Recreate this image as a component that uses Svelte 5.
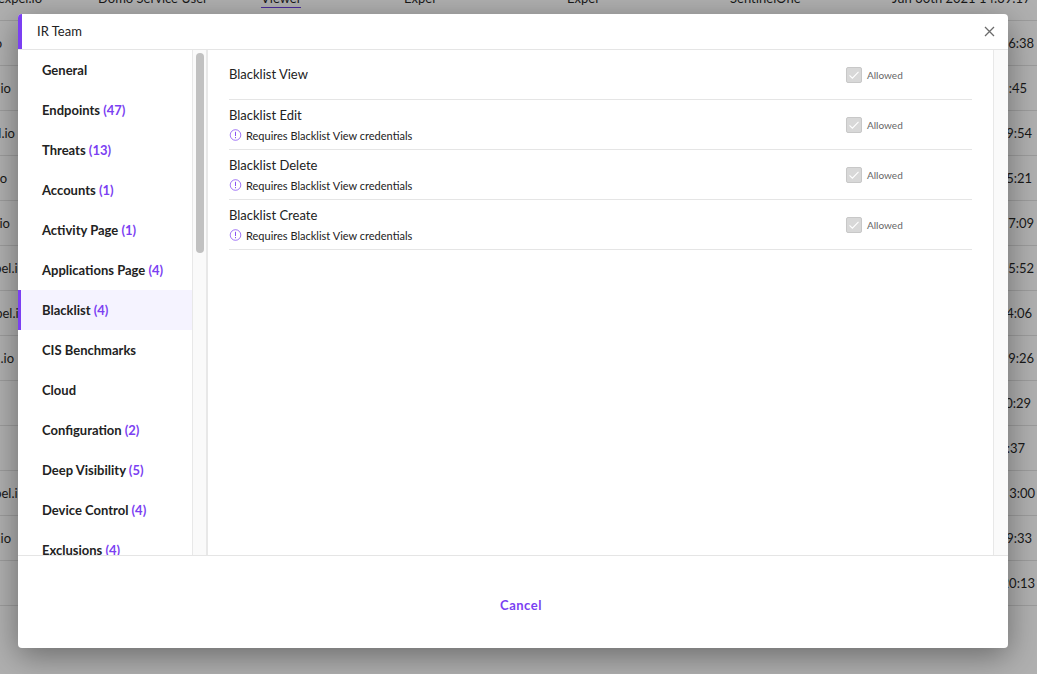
<script>
    let selected = 'Blacklist';

    const sections = [
        { name: 'General', count: 0 },
        { name: 'Endpoints', count: 47 },
        { name: 'Threats', count: 13 },
        { name: 'Accounts', count: 1 },
        { name: 'Activity Page', count: 1 },
        { name: 'Applications Page', count: 4 },
        { name: 'Blacklist', count: 4 },
        { name: 'CIS Benchmarks', count: 0 },
        { name: 'Cloud', count: 0 },
        { name: 'Configuration', count: 2 },
        { name: 'Deep Visibility', count: 5 },
        { name: 'Device Control', count: 4 },
        { name: 'Exclusions', count: 4 },
    ];

    const permissions = [
        { name: 'Blacklist View', requires: '' },
        { name: 'Blacklist Edit', requires: 'Blacklist View' },
        { name: 'Blacklist Delete', requires: 'Blacklist View' },
        { name: 'Blacklist Create', requires: 'Blacklist View' },
    ];

    // mailEnd and timeEnd are where the text of each cell stops
    const users = [
        { mail: 'o', mailEnd: 2, time: '6:38', timeEnd: 1034 },
        { mail: 'io', mailEnd: 11, time: ':45', timeEnd: 1027 },
        { mail: 'l.io', mailEnd: 15, time: '9:54', timeEnd: 1032 },
        { mail: 'o', mailEnd: 7, time: '5:21', timeEnd: 1032 },
        { mail: 'io', mailEnd: 10, time: '7:09', timeEnd: 1034 },
        { mail: 'pel.io', mailEnd: 25, time: '5:52', timeEnd: 1034 },
        { mail: 'pel.io', mailEnd: 26, time: '4:06', timeEnd: 1032 },
        { mail: '.io', mailEnd: 14, time: '9:26', timeEnd: 1034 },
        { mail: '', mailEnd: 0, time: '0:29', timeEnd: 1031 },
        { mail: '', mailEnd: 0, time: ':37', timeEnd: 1025 },
        { mail: 'pel.io', mailEnd: 25, time: '3:00', timeEnd: 1035 },
        { mail: '.io', mailEnd: 11, time: '9:33', timeEnd: 1032 },
        { mail: '', mailEnd: 0, time: '20:13', timeEnd: 1035 },
    ];
</script>

<div class="page">
    <div class="users">
        <div class="user-row first">
            <span class="c-mail">expel.io</span>
            <span class="c-name">Domo Service User</span>
            <span class="c-role"><span class="role">Viewer</span></span>
            <span class="c-account">Expel</span>
            <span class="c-site">Expel</span>
            <span class="c-source">SentinelOne</span>
            <span class="c-date">Jun 30th 2021 14:39:17</span>
        </div>
        {#each users as user}
            <div class="user-row">
                <span class="mail" style="width: {user.mailEnd}px">{user.mail}</span>
                <span class="time" style="width: {user.timeEnd - user.mailEnd}px">{user.time}</span>
            </div>
        {/each}
    </div>

    <div class="modal">
        <header>
            <h1>IR Team</h1>
            <button class="close" aria-label="Close">
                <svg width="11" height="11" viewBox="0 0 11 11">
                    <path d="M1 1L10 10M10 1L1 10" fill="none" stroke="#6b6b6b" stroke-width="1.3" />
                </svg>
            </button>
        </header>

        <div class="body">
            <nav>
                {#each sections as section}
                    <button
                        class="section"
                        class:active={section.name === selected}
                        on:click={() => (selected = section.name)}
                    >
                        {section.name}
                        {#if section.count}<span class="count">({section.count})</span>{/if}
                    </button>
                {/each}
            </nav>
            <div class="track left"><div class="thumb"></div></div>

            <div class="permissions">
                {#each permissions as permission}
                    <div class="permission">
                        <div class="info" class:single={!permission.requires}>
                            <div class="name">{permission.name}</div>
                            {#if permission.requires}
                                <div class="hint">
                                    <svg width="13" height="12" viewBox="0 0 13 12">
                                        <circle cx="6.5" cy="6" r="5.3" fill="none" stroke="#7b3ff2" stroke-width="0.7" />
                                        <path d="M6.5 2.8V7M6.5 8V9.2" stroke="#7b3ff2" stroke-width="0.9" />
                                    </svg>
                                    <span class="hint-text">Requires {permission.requires} credentials</span>
                                </div>
                            {/if}
                        </div>
                        <div class="allowed">
                            <span class="checkbox">
                                <svg width="14" height="14" viewBox="0 0 14 14">
                                    <path d="M2.5 7.3L5.4 10.2L11.5 3.8" fill="none" stroke="#fff" stroke-width="1.1" />
                                </svg>
                            </span>
                            <span>Allowed</span>
                        </div>
                    </div>
                {/each}
            </div>
            <div class="track right"></div>
        </div>

        <footer>
            <button class="cancel">Cancel</button>
        </footer>
    </div>
</div>

<style>
    :global(body) {
        margin: 0;
    }

    .page {
        position: relative;
        width: 1037px;
        height: 674px;
        overflow: hidden;
        background: #b0b0b0;
        font-family: Lato, sans-serif;
        font-size: 13px;
        color: #222;
    }

    button {
        padding: 0;
        border: none;
        background: none;
        font: inherit;
        cursor: pointer;
    }

    .users {
        margin-top: -25px;
    }

    .user-row {
        display: flex;
        align-items: center;
        box-sizing: border-box;
        height: 45px;
        border-bottom: 1px solid #9c9c9c;
        white-space: nowrap;
        color: #181818;
    }

    .user-row.first {
        display: grid;
        grid-template-columns: 98px 163px 143px 163px 163px 162px 145px;
        height: 46px;
    }

    .c-mail {
        justify-self: end;
        margin-right: 56px;
    }

    .role {
        padding-bottom: 1px;
        border-bottom: 1px solid #4a2a99;
    }

    .mail,
    .time {
        display: flex;
        flex: none;
        justify-content: flex-end;
    }

    .modal {
        position: absolute;
        left: 18px;
        top: 14px;
        display: flex;
        flex-direction: column;
        width: 990px;
        height: 634px;
        overflow: hidden;
        border-radius: 4px;
        background: #fff;
        box-shadow: 0 8px 32px rgba(0, 0, 0, 0.4);
    }

    header {
        display: flex;
        align-items: center;
        justify-content: space-between;
        box-sizing: border-box;
        height: 36px;
        padding: 0 13px 0 15px;
        border-bottom: 1px solid #e5e5e5;
        background: linear-gradient(#7b3ff2, #7b3ff2) no-repeat 0 0 / 4px 100%;
    }

    h1 {
        margin: 0;
        padding: 0 0 2px 4px;
        font-size: 13px;
        font-weight: 400;
    }

    .close {
        display: flex;
    }

    .body {
        display: flex;
        height: 505px;
        border-bottom: 1px solid #e5e5e5;
        overflow: hidden;
    }

    nav {
        width: 174px;
        flex: none;
    }

    .section {
        display: block;
        box-sizing: border-box;
        width: 100%;
        height: 40px;
        padding: 0 0 0 21px;
        border-left: 3px solid transparent;
        font-size: 13px;
        font-weight: 700;
        text-align: left;
        white-space: nowrap;
        color: #222;
    }

    .section.active {
        border-left-color: #7b3ff2;
        background: #f5f3ff;
    }

    .count {
        color: #7b3ff2;
    }

    .track {
        box-sizing: border-box;
        flex: none;
        border-left: 1px solid #e8e8e8;
        background: #fafafa;
    }

    .track.left {
        width: 16px;
        padding: 3px 0 0 3px;
        border-right: 2px solid #e8e8e8;
    }

    .track.right {
        width: 15px;
    }

    .thumb {
        width: 8px;
        height: 200px;
        border-radius: 4px;
        background: #c1c1c1;
    }

    .permissions {
        flex: 1;
        padding: 0 21px;
    }

    .permission {
        display: flex;
        align-items: center;
        justify-content: space-between;
        box-sizing: border-box;
        height: 50px;
        border-bottom: 1px solid #e5e5e5;
    }

    .single {
        padding-bottom: 2px;
    }

    .name {
        line-height: 20px;
    }

    .hint {
        display: flex;
        align-items: center;
        gap: 4px;
        height: 20px;
        font-size: 11px;
    }

    .hint-text {
        padding-top: 2px;
    }

    .allowed {
        display: flex;
        align-items: center;
        gap: 5px;
        width: 126px;
        padding-top: 1px;
        font-size: 10px;
        color: #666;
    }

    .checkbox {
        display: flex;
        box-sizing: border-box;
        width: 16px;
        height: 16px;
        border: 1px solid #c8c8c8;
        border-radius: 2px;
        background: #d8d8d8;
    }

    footer {
        display: flex;
        flex: 1;
        align-items: center;
        justify-content: center;
    }

    .cancel {
        padding: 6px 0 0 16px;
        font-size: 13px;
        font-weight: 700;
        letter-spacing: 0.5px;
        color: #7b3ff2;
    }
</style>
